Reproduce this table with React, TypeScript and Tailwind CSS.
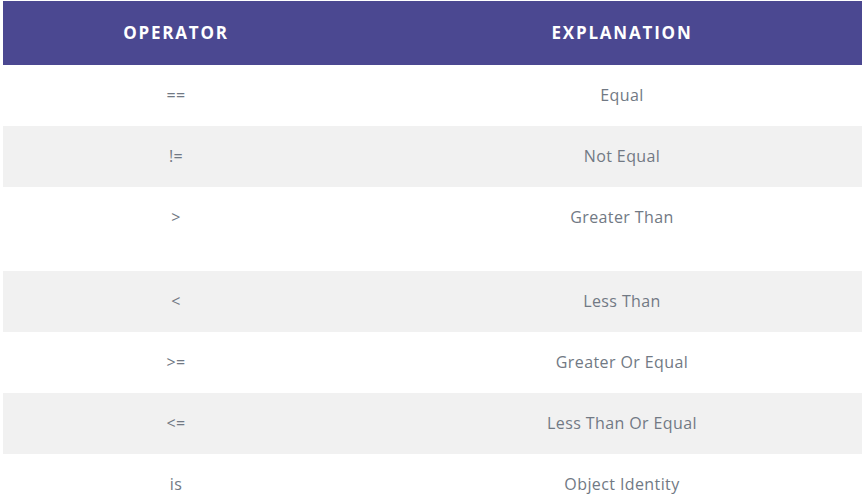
import React from "react";

const rows: [string, string, boolean][] = [
  ["==", "Equal", false],
  ["!=", "Not Equal", true],
  [">", "Greater Than", false],
  ["<", "Less Than", true],
  [">=", "Greater Or Equal", false],
  ["<=", "Less Than Or Equal", true],
  ["is", "Object Identity", false],
];

export default function App() {
  return (
    <div
      className="w-[862px] h-[504px] overflow-hidden bg-white pt-px pl-[3px]"
      style={{ fontFamily: "'Open Sans', 'Liberation Sans', sans-serif" }}
    >
      <div className="w-[892px]">
        <div className="flex h-[64px] items-center bg-[#4b4891] text-white font-bold text-[17px] tracking-[1.8px]">
          <div className="w-[346px] text-center">OPERATOR</div>
          <div className="w-[546px] text-center">EXPLANATION</div>
        </div>
        {rows.map(([op, ex, gray], i) => (
          <div
            key={i}
            className={`flex items-start pt-[19px] text-[16px] tracking-[0.4px] leading-[22px] text-[#717984] ${
              gray ? "bg-[#f1f1f1]" : "bg-white"
            } ${i === 2 ? "h-[84px]" : "h-[61px]"}`}
          >
            <div className="w-[346px] text-center">{op}</div>
            <div className="w-[546px] text-center">{ex}</div>
          </div>
        ))}
      </div>
    </div>
  );
}
